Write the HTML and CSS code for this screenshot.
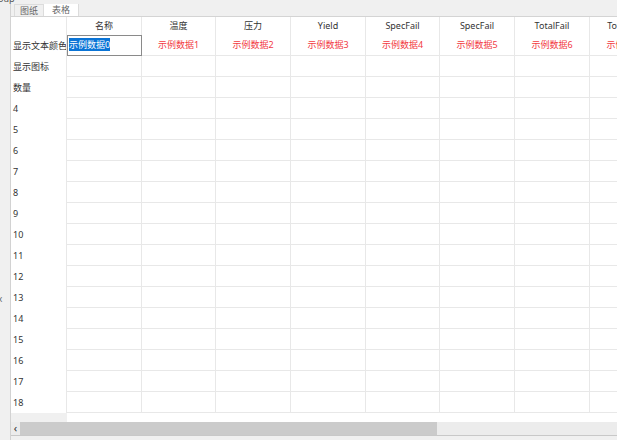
FILE: index.html
```
<!DOCTYPE html>
<html>
<head>
<meta charset="utf-8">
<title>表格</title>
<link rel="stylesheet" href="styles.css">
</head>
<body>

<div class="caption"><span>Group</span></div>

<div class="main">
  <div class="side"><span>x</span></div>

  <div class="frame">
    <div class="tabs">
      <div class="tab">图纸</div>
      <div class="tab on">表格</div>
    </div>

    <div class="panel">
      <div class="grid" id="grid">
        <div class="hd corner"></div>
        <div class="hd">名称</div>
        <div class="hd">温度</div>
        <div class="hd">压力</div>
        <div class="hd">Yield</div>
        <div class="hd">SpecFail</div>
        <div class="hd">SpecFail</div>
        <div class="hd">TotalFail</div>
        <div class="hd">TotalPass</div>

        <div class="rh">显示文本颜色</div>
        <div class="c sel"><span>示例数据0</span></div>
        <div class="c red">示例数据1</div>
        <div class="c red">示例数据2</div>
        <div class="c red">示例数据3</div>
        <div class="c red">示例数据4</div>
        <div class="c red">示例数据5</div>
        <div class="c red">示例数据6</div>
        <div class="c red">示例数据7</div>
      </div>

      <div class="filler"><div class="fl"></div><div class="fr"></div></div>

      <div class="hscroll">
        <div class="arrow">&lsaquo;</div>
        <div class="thumb"></div>
        <div class="track"></div>
      </div>
    </div>
  </div>
</div>

<script>
  // remaining rows are empty, just row labels
  var labels = ["显示图标", "数量"];
  for (var i = 4; i <= 18; i++) labels.push(String(i));
  var g = document.getElementById("grid");
  for (var r = 0; r < labels.length; r++) {
    var h = document.createElement("div");
    h.className = "rh";
    h.textContent = labels[r];
    g.appendChild(h);
    for (var c = 0; c < 8; c++) {
      var d = document.createElement("div");
      d.className = "c";
      g.appendChild(d);
    }
  }
</script>

</body>
</html>
```

FILE: styles.css
```
html, body {
    margin: 0;
    height: 440px;
    overflow: hidden;
}

body {
    background-color: #f0f0f0;
    font-family: "Noto Sans", "Noto Sans CJK SC", sans-serif;
    font-size: 9px;
    color: #333;
}

.caption {
    height: 4px;
    overflow: hidden;
    font-size: 9px;
    line-height: 4px;
    color: #555;
}
.caption span {
    display: block;
    margin-left: -12px;
    margin-top: -3px;
}

.main {
    display: flex;
    height: 436px;
}

.side {
    width: 10px;
    padding-top: 289px;
    overflow: hidden;
    color: #666;
    font-size: 8px;
}
.side span {
    display: block;
    margin-left: -2px;
}

.frame {
    flex: 1;
    min-width: 0;
    display: flex;
    flex-direction: column;
    border-left: 1px solid #d2d2d2;
    overflow: hidden;
}

.tabs {
    display: flex;
    align-items: flex-end;
    height: 12px;
    padding-left: 3px;
}
.tab {
    height: 11px;
    padding: 0 5px;
    line-height: 11px;
    color: #666;
    border: 1px solid #dcdcdc;
    border-bottom: none;
    background-color: #f0f0f0;
}
.tab.on {
    height: 12px;
    line-height: 12px;
    padding: 0 8px;
    background-color: #fff;
    border-left: none;
}

.panel {
    border-top: 1px solid #d4d4d4;
    display: flex;
    flex-direction: column;
    background-color: #fff;
    border-bottom: 1px solid #c8c8c8;
}

.grid {
    display: grid;
    grid-template-columns: 56px 75px 74px 75px 75px 74px 75px 75px 75px;
    grid-template-rows: 18px;
    grid-auto-rows: 21px;
}

.grid > div {
    box-sizing: border-box;
    border-right: 1px solid #e8e8e8;
    white-space: nowrap;
    overflow: hidden;
}

.hd {
    text-align: center;
    line-height: 18px;
    color: #333;
}

.rh {
    padding-left: 2px;
    line-height: 21px;
    color: #333;
}

.c {
    border-bottom: 1px solid #e8e8e8;
    text-align: center;
    line-height: 20px;
}
.c.red {
    color: #f23a3f;
}
.c.sel {
    border: 1px solid #8a8a8a;
    text-align: left;
    line-height: 18px;
    padding-left: 1px;
}
.c.sel span {
    background-color: #0a74d6;
    color: #fff;
}

.filler {
    display: flex;
    height: 9px;
}
.fl {
    width: 55px;
    background-color: #f0f0f0;
    border-right: 1px solid #f0f0f0;
}
.fr {
    flex: 1;
    background-color: #fff;
}

.hscroll {
    display: flex;
    height: 13px;
    background-color: #ececec;
}
.arrow {
    width: 9px;
    text-align: center;
    line-height: 12px;
    font-size: 11px;
    color: #333;
}
.thumb {
    width: 417px;
    background-color: #cbcbcb;
}
.track {
    flex: 1;
}
```
